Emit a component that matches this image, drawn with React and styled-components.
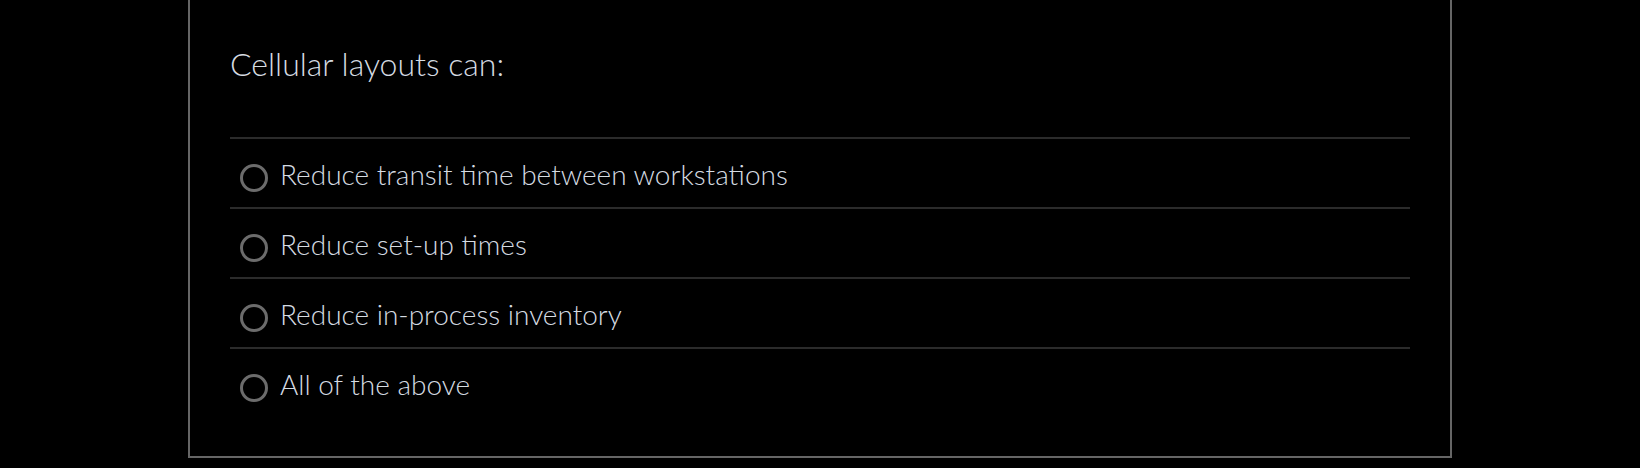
import React from 'react';
import styled, { createGlobalStyle } from 'styled-components';

const GlobalStyle = createGlobalStyle`
    html, body {
        margin: 0;
        padding: 0;
        background: #000;
    }
    * {
        box-sizing: border-box;
    }
`

const Page = styled.div`
    width: 100%;
    height: 468px;
    background: #000;
    overflow: hidden;
`

const Card = styled.div`
    width: 1264px;
    margin: 0 auto;
    border: 2px solid #666;
    border-top: 0;
    padding: 46px 40px 39px;
    font-family: Lato, "Open Sans", sans-serif;
    color: #d5dbe2;
`

const Question = styled.div`
    font-size: 32px;
    font-weight: 300;
    line-height: 36px;
    margin-bottom: 55px;
`

const Options = styled.div`
    display: flex;
    flex-direction: column;
`

const Option = styled.label`
    display: flex;
    align-items: center;
    gap: 12px;
    height: 70px;
    padding: 9px 0 0 10px;
    border-top: 2px solid #2b2b2b;
    font-size: 28px;
    font-weight: 300;
    cursor: pointer;
`

const Radio = styled.span`
    flex: none;
    width: 28px;
    height: 28px;
    border-radius: 50%;
    border: 3px solid #6c6c6c;
`

const Label = styled.span`
    padding-bottom: 7px;
`

const answers = [
    'Reduce transit time between workstations',
    'Reduce set-up times',
    'Reduce in-process inventory',
    'All of the above',
];

export default function App(){
    return (
        <Page>
            <GlobalStyle />
            <Card>
                <Question>Cellular layouts can:</Question>
                <Options>
                    {answers.map((a) => (
                        <Option key={a}>
                            <Radio />
                            <Label>{a}</Label>
                        </Option>
                    ))}
                </Options>
            </Card>
        </Page>
    );
}
